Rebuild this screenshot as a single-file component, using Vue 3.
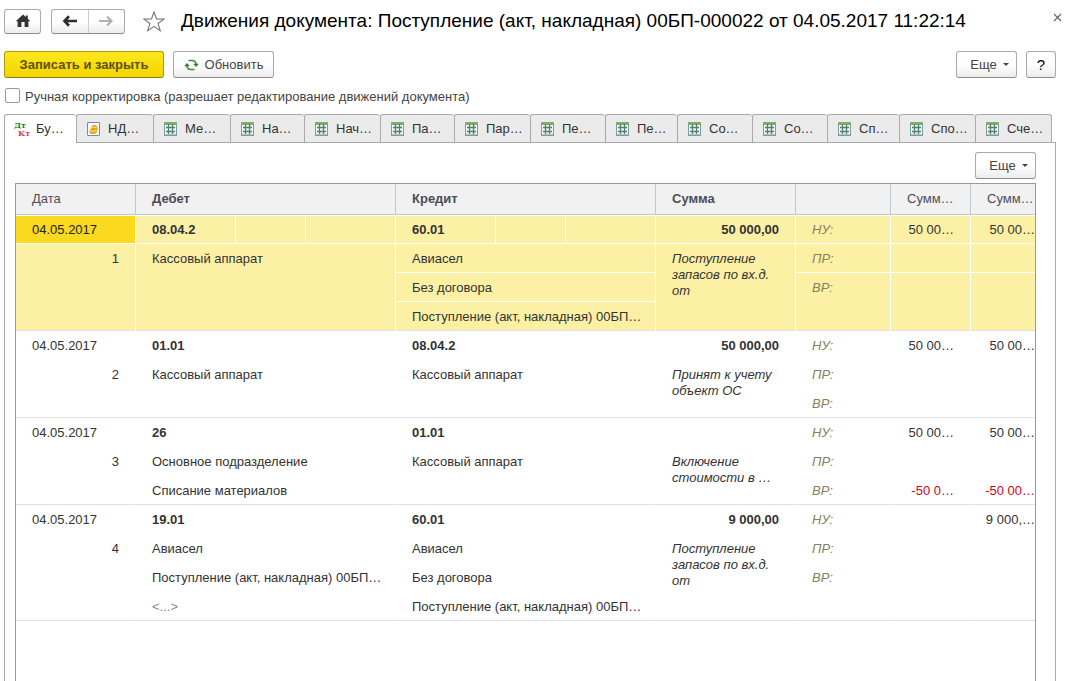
<script setup>
import { ref } from 'vue'

const manual = ref(false)
const activeTab = ref(0)

const tabs = [
  { text: 'Бу…', icon: 'entries' },
  { text: 'НД…', icon: 'ledger' },
  { text: 'Ме…', icon: 'grid' },
  { text: 'На…', icon: 'grid' },
  { text: 'Нач…', icon: 'grid' },
  { text: 'Па…', icon: 'grid' },
  { text: 'Пар…', icon: 'grid' },
  { text: 'Пе…', icon: 'grid' },
  { text: 'Пе…', icon: 'grid' },
  { text: 'Со…', icon: 'grid' },
  { text: 'Со…', icon: 'grid' },
  { text: 'Сп…', icon: 'grid' },
  { text: 'Спо…', icon: 'grid' },
  { text: 'Сче…', icon: 'grid' },
]

const kinds = ['НУ:', 'ПР:', 'ВР:']

const records = [
  {
    date: '04.05.2017', rows: 4, debit: '08.04.2', credit: '60.01', sum: '50 000,00',
    debitLines: ['Кассовый аппарат'],
    creditLines: ['Авиасел', 'Без договора', 'Поступление (акт, накладная) 00БП…'],
    note: ['Поступление', 'запасов по вх.д.', 'от'],
    dt: ['50 00…', '', ''], kt: ['50 00…', '', ''],
  },
  {
    date: '04.05.2017', rows: 3, debit: '01.01', credit: '08.04.2', sum: '50 000,00',
    debitLines: ['Кассовый аппарат'],
    creditLines: ['Кассовый аппарат'],
    note: ['Принят к учету', 'объект ОС'],
    dt: ['50 00…', '', ''], kt: ['50 00…', '', ''],
  },
  {
    date: '04.05.2017', rows: 3, debit: '26', credit: '01.01', sum: '',
    debitLines: ['Основное подразделение', 'Списание материалов'],
    creditLines: ['Кассовый аппарат'],
    note: ['Включение', 'стоимости в …'],
    dt: ['50 00…', '', '-50 0…'], kt: ['50 00…', '', '-50 00…'],
  },
  {
    date: '04.05.2017', rows: 4, debit: '19.01', credit: '60.01', sum: '9 000,00',
    debitLines: ['Авиасел', 'Поступление (акт, накладная) 00БП…', '<...>'],
    creditLines: ['Авиасел', 'Без договора', 'Поступление (акт, накладная) 00БП…'],
    note: ['Поступление', 'запасов по вх.д.', 'от'],
    dt: ['', '', ''], kt: ['9 000,…', '', ''],
  },
]

// The last line of a group takes all the rows that are left in the record.
const span = (count, index, rows) => (index === count - 1 ? rows - index : 1)
</script>

<template>
  <main class="window">
    <header class="titlebar">
      <button class="btn icon-btn" type="button" aria-label="Начальная страница">
        <svg width="16" height="14" viewBox="0 0 16 14"><path d="M8 0.500 L10.800 3 V1.500 H12.800 V4.800 L15.300 7.300 H13.400 V13 H9.600 V8 H6.400 V13 H2.600 V7.300 H0.700 Z" fill="#333" /></svg>
      </button>
      <div class="nav">
        <button type="button" aria-label="Назад">
          <svg width="16" height="12" viewBox="0 0 16 12"><path d="M7 1.300 L2.500 6 L7 10.700 M2.500 6 H15" fill="none" stroke="#2d2d2d" stroke-width="2.700" /></svg>
        </button>
        <button type="button" aria-label="Вперед">
          <svg width="16" height="12" viewBox="0 0 16 12"><path d="M9 1.500 L13.500 6 L9 10.500 M13.500 6 H1" fill="none" stroke="#b0b0b0" stroke-width="2.200" /></svg>
        </button>
      </div>
      <button class="plain star" type="button" aria-label="В избранное">
        <svg width="22" height="21" viewBox="0 0 22 21"><path d="M11 1 L13.500 8 L21 8.100 L15 12.500 L17.300 19.700 L11 15.400 L4.700 19.700 L7 12.500 L1 8.100 L8.500 8 Z" fill="#fff" stroke="#777" stroke-width="1.100" /></svg>
      </button>
      <h1>Движения документа: Поступление (акт, накладная) 00БП-000022 от 04.05.2017 11:22:14</h1>
      <button class="plain close" type="button" aria-label="Закрыть">
        <svg width="9" height="9" viewBox="0 0 9 9"><path d="M1 1 L8 8 M8 1 L1 8" stroke="#666" stroke-width="1.200" /></svg>
      </button>
    </header>

    <div class="commands">
      <button class="btn primary" type="button">Записать и закрыть</button>
      <button class="btn refresh" type="button">
        <svg width="15" height="12" viewBox="0 0 15 12"><g fill="none" stroke="#3d8a45" stroke-width="1.500"><path d="M4.500 1.500 H8 Q11.800 1.500 12 5" /><path d="M10.500 10.500 H7 Q3.200 10.500 3 7" /></g><path d="M9.200 4.700 H14.800 L12 8 Z M0.200 7.300 H5.800 L3 4 Z" fill="#2f7a36" /></svg>
        Обновить
      </button>
      <button class="btn more push" type="button">Еще <i class="caret"></i></button>
      <button class="btn help" type="button">?</button>
    </div>

    <label class="manual">
      <input v-model="manual" type="checkbox" />
      <span>Ручная корректировка (разрешает редактирование движений документа)</span>
    </label>

    <div class="tabs" role="tablist">
      <button
        v-for="(tab, i) in tabs" :key="i" type="button" role="tab"
        class="tab" :class="{ active: i === activeTab }" :aria-selected="i === activeTab"
        @click="activeTab = i"
      >
        <svg v-if="tab.icon === 'entries'" class="entries" width="18" height="18" viewBox="0 0 18 18">
          <text x="0" y="8" fill="#2f7d1e">Дт</text>
          <text x="4" y="16" fill="#e04050">Кт</text>
        </svg>
        <svg v-else-if="tab.icon === 'ledger'" width="13" height="14" viewBox="0 0 13 14">
          <rect x="0.500" y="0.500" width="12" height="13" rx="0.500" fill="#f5f8fa" stroke="#6f8fa6" />
          <path d="M2.500 8.500 V11 Q6 13 9.500 11 L10.500 8 V4 Q7 2 4.500 4 V6 Z" fill="#e2a616" />
          <path d="M4.500 4.800 Q7 6.300 10 4.800 M3 8.600 Q6 10.300 9.800 8.300" fill="none" stroke="#ffec8c" />
        </svg>
        <svg v-else width="13" height="14" viewBox="0 0 13 14">
          <rect x="0.500" y="0.500" width="12" height="13" fill="#f1f6f6" stroke="#7c9aa8" />
          <rect x="0" y="0" width="13" height="3" fill="#7fae6c" />
          <path d="M4.500 2 V12 M8.500 2 V12 M2 5.500 H11 M2 9.500 H11" stroke="#55806c" stroke-width="1.300" />
          <path d="M1 12.500 H12" stroke="#a9bfc0" />
        </svg>
        <span>{{ tab.text }}</span>
      </button>
    </div>

    <section class="panel" role="tabpanel">
      <div class="panel-commands">
        <button class="btn more" type="button">Еще <i class="caret"></i></button>
      </div>
      <div class="grid-box">
        <table>
          <colgroup>
            <col class="w120" />
            <col class="w100" /><col class="w70" /><col class="w90" />
            <col class="w100" /><col class="w70" /><col class="w90" />
            <col class="w140" /><col class="w95" /><col class="w80" /><col />
          </colgroup>
          <thead>
            <tr>
              <th scope="col">Дата</th>
              <th scope="col" colspan="3" class="strong">Дебет</th>
              <th scope="col" colspan="3" class="strong">Кредит</th>
              <th scope="col" class="strong">Сумма</th>
              <th></th>
              <th scope="col">Сумм…</th>
              <th scope="col" class="edge">Сумм…</th>
            </tr>
          </thead>
          <tbody v-for="(rec, r) in records" :key="r" :class="{ selected: r === 0 }">
            <tr v-for="n in rec.rows" :key="n">
              <template v-if="n === 1">
                <td class="date">{{ rec.date }}</td>
                <td class="strong">{{ rec.debit }}</td><td></td><td></td>
                <td class="strong">{{ rec.credit }}</td><td></td><td></td>
                <td class="strong num">{{ rec.sum }}</td>
              </template>
              <template v-else>
                <td v-if="n === 2" class="num last" :rowspan="rec.rows - 1">{{ r + 1 }}</td>
                <td
                  v-if="n - 2 < rec.debitLines.length" colspan="3"
                  :rowspan="span(rec.debitLines.length, n - 2, rec.rows - 1)"
                  :class="{ last: n - 1 === rec.debitLines.length, dim: rec.debitLines[n - 2] === '<...>' }"
                >{{ rec.debitLines[n - 2] }}</td>
                <td
                  v-if="n - 2 < rec.creditLines.length" colspan="3"
                  :rowspan="span(rec.creditLines.length, n - 2, rec.rows - 1)"
                  :class="{ last: n - 1 === rec.creditLines.length }"
                >{{ rec.creditLines[n - 2] }}</td>
                <td v-if="n === 2" class="note last" :rowspan="rec.rows - 1">
                  <div v-for="line in rec.note" :key="line">{{ line }}</div>
                </td>
              </template>
              <template v-if="n <= 3">
                <td class="kind" :class="{ last: n === 3 }" :rowspan="span(3, n - 1, rec.rows)">{{ kinds[n - 1] }}</td>
                <td
                  class="num" :class="{ last: n === 3, minus: rec.dt[n - 1].startsWith('-') }"
                  :rowspan="span(3, n - 1, rec.rows)"
                >{{ rec.dt[n - 1] }}</td>
                <td
                  class="num edge" :class="{ last: n === 3, minus: rec.kt[n - 1].startsWith('-') }"
                  :rowspan="span(3, n - 1, rec.rows)"
                >{{ rec.kt[n - 1] }}</td>
              </template>
            </tr>
          </tbody>
        </table>
      </div>
    </section>
  </main>
</template>

<style>
body {
  margin: 0;
  background: #fff;
}
</style>

<style scoped>
* {
  box-sizing: border-box;
}
.window {
  display: flex;
  flex-direction: column;
  min-height: 100vh;
  padding: 8px 4px 0;
  font: 13px/16px "Liberation Sans", Arial, sans-serif;
  color: #333;
}
button {
  font: inherit;
  color: inherit;
  padding: 0;
  margin: 0;
}
svg {
  flex: none;
  display: block;
}
.titlebar {
  display: flex;
  align-items: center;
  height: 26px;
}
.btn {
  display: flex;
  align-items: center;
  justify-content: center;
  height: 27px;
  border: 1px solid #aaa;
  border-bottom-color: #8c8c8c;
  border-radius: 3px;
  background: linear-gradient(#fff 50%, #ececec);
  color: #444;
}
.icon-btn {
  width: 37px;
  height: 25px;
}
.nav {
  display: flex;
  width: 74px;
  height: 25px;
  margin-left: 10px;
  border: 1px solid #aaa;
  border-bottom-color: #8c8c8c;
  border-radius: 3px;
  background: linear-gradient(#fff 50%, #ececec);
}
.nav button {
  flex: 1;
  display: flex;
  align-items: center;
  justify-content: center;
  border: 0;
  background: none;
}
.nav button + button {
  border-left: 1px solid #ccc;
}
.plain {
  border: 0;
  background: none;
}
.star {
  margin: 0 16px 0 18px;
}
h1 {
  flex: 1;
  min-width: 0;
  margin: 0;
  font-size: 19px;
  line-height: 26px;
  font-weight: normal;
  color: #000;
  white-space: nowrap;
}
.close {
  align-self: flex-start;
  margin: 5px 3px 0 0;
}
.commands {
  display: flex;
  margin-top: 17px;
  padding-right: 9px;
}
.primary {
  width: 160px;
  border-color: #b39b00;
  border-bottom-color: #8f7c00;
  background: linear-gradient(#ffe81f, #f2d500);
  color: #5f5210;
  font-weight: bold;
}
.refresh {
  width: 101px;
  margin-left: 9px;
  gap: 6px;
}
.more {
  width: 61px;
  padding-left: 6px;
  gap: 6px;
}
.push {
  margin-left: auto;
}
.caret {
  border: 3px solid transparent;
  border-top-color: #444;
  border-bottom: 0;
}
.help {
  width: 30px;
  margin-left: 9px;
  font-size: 15px;
  color: #000;
}
.manual {
  display: flex;
  align-items: flex-start;
  align-self: flex-start;
  gap: 5px;
  height: 18px;
  margin-top: 10px;
  color: #444;
}
.manual span {
  padding-top: 1px;
}
.manual input {
  appearance: none;
  width: 15px;
  height: 15px;
  margin: 0 0 0 1px;
  border: 1px solid #999;
  border-radius: 2px;
  background: #fff;
}
.manual input:checked {
  background: #777;
}
.tabs {
  display: grid;
  grid-template-columns: 72fr 77fr 77fr 74fr 76fr 74fr 76fr 75fr 72fr 75fr 75fr 72fr 76fr 77fr;
  height: 28px;
  margin: 8px 13px 0 0;
}
.tab {
  display: flex;
  align-items: center;
  gap: 8px;
  min-width: 0;
  padding-left: 10px;
  border: 1px solid #aaa;
  border-width: 1px 0 0 1px;
  border-radius: 3px 3px 0 0;
  background: #ebebeb;
  white-space: nowrap;
}
.tab:last-child {
  border-right-width: 1px;
}
.tab.active {
  z-index: 1;
  gap: 4px;
  margin-bottom: -1px;
  padding-left: 9px;
  background: #fff;
}
.entries text {
  font: bold 8px "DejaVu Serif", serif;
}
.panel {
  flex: 1;
  display: flex;
  flex-direction: column;
  margin-right: 9px;
  padding: 9px 19px 0 10px;
  border: 1px solid #aaa;
  border-bottom: 0;
}
.panel-commands {
  display: flex;
  justify-content: flex-end;
}
.grid-box {
  flex: 1;
  margin-top: 4px;
  border: 1px solid #999;
  border-bottom: 0;
}
table {
  width: 100%;
  table-layout: fixed;
  border-collapse: separate;
  border-spacing: 0;
}
.w70 { width: 70px; }
.w80 { width: 80px; }
.w90 { width: 90px; }
.w95 { width: 95px; }
.w100 { width: 100px; }
.w120 { width: 120px; }
.w140 { width: 140px; }
th {
  height: 31px;
  padding: 0 0 0 16px;
  border-right: 1px solid #c3c7cf;
  border-bottom: 1px solid #c3c7cf;
  background: #f1f1f1;
  color: #4d4d57;
  font-weight: normal;
  text-align: left;
  white-space: nowrap;
}
.strong {
  font-weight: bold;
}
td {
  height: 29px;
  padding: 7px 0 5px 16px;
  border-right: 1px solid #fff;
  border-bottom: 1px solid #fff;
  vertical-align: top;
  white-space: nowrap;
}
td.last {
  border-bottom-color: #e2e2e2;
}
.num {
  padding-right: 16px;
  padding-left: 0;
  text-align: right;
}
th.edge,
td.edge {
  border-right: 0;
}
td.edge {
  padding-right: 0;
}
.note {
  font-style: italic;
}
.kind {
  font-style: italic;
  color: #858060;
}
.minus {
  color: #d0021b;
}
.dim {
  color: #888;
}
.selected td {
  background: #fbf0a4;
}
.selected td.date {
  background: #fad91e;
  color: #222;
}
.selected tr:first-child td {
  border-top: 1px solid #fff;
  padding-top: 6px;
}
</style>
